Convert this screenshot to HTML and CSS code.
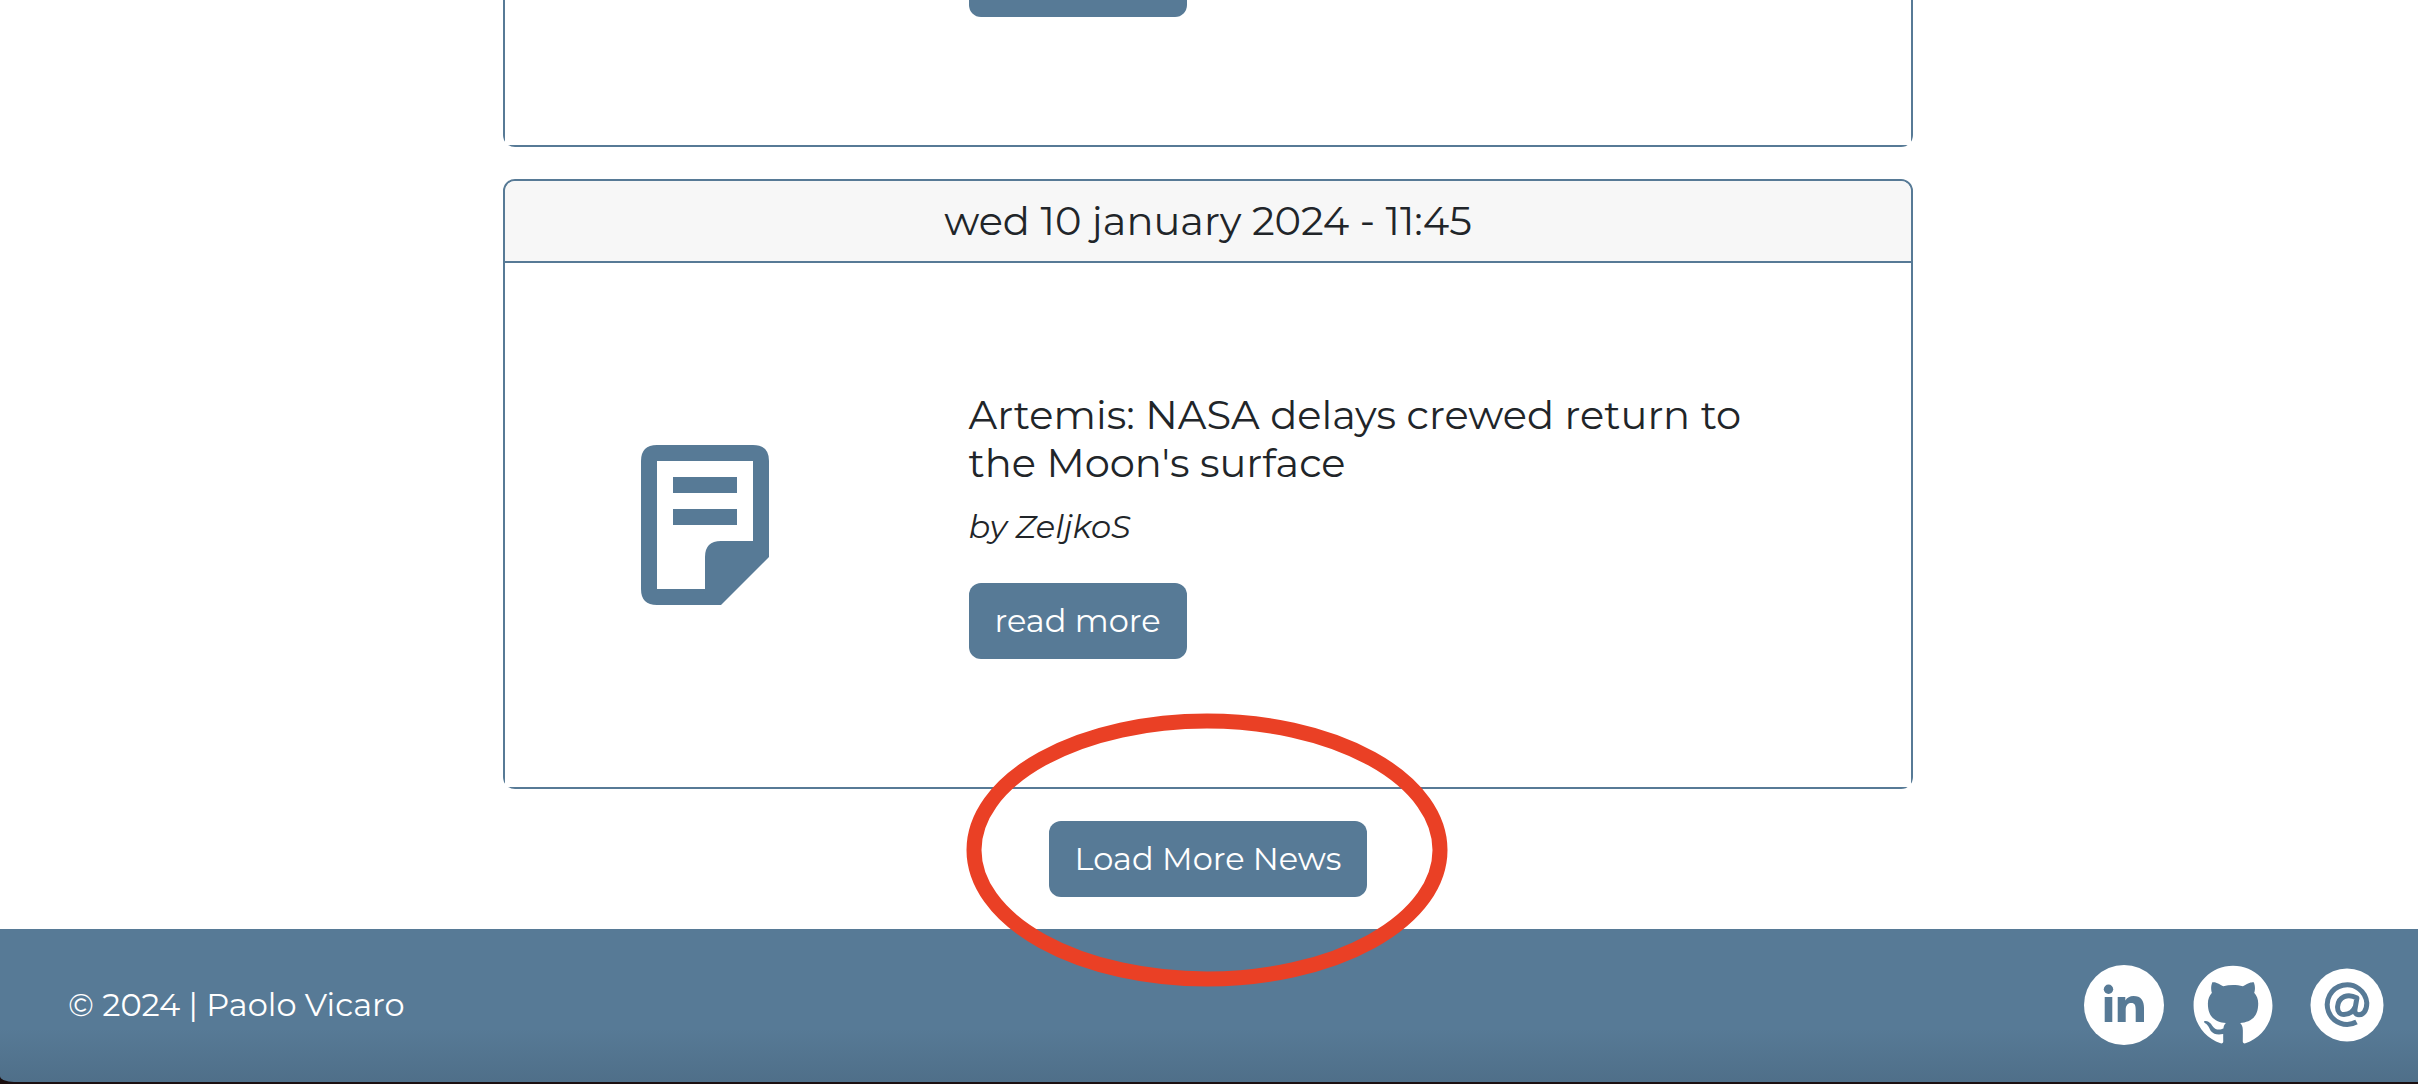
FILE: index.html
```html
<!DOCTYPE html>
<html lang="en">
<head>
<meta charset="utf-8">
<meta name="viewport" content="width=device-width, initial-scale=1">
<title>News</title>
<link rel="stylesheet" href="styles.css">
</head>
<body>
<main class="news">
  <article class="card">
    <div class="card-body">
      <div class="card-icon"></div>
      <div class="card-text">
        <button class="btn" type="button">read more</button>
      </div>
    </div>
  </article>

  <article class="card">
    <header class="card-header">wed 10 january 2024 - 11:45</header>
    <div class="card-body">
      <div class="card-icon">
        <svg class="note" viewBox="0 0 8 10" aria-hidden="true">
          <path fill-rule="evenodd" d="M1 0H7Q8 0 8 1V7L5 10H1Q0 10 0 9V1Q0 0 1 0ZM1 1V9H4V7Q4 6 5 6H7V1ZM2 2H6V3H2ZM2 4H6V5H2Z"/>
        </svg>
      </div>
      <div class="card-text">
        <h2 class="title">Artemis: NASA delays crewed return to the Moon's surface</h2>
        <p class="author">by ZeljkoS</p>
        <button class="btn" type="button">read more</button>
      </div>
    </div>
  </article>

  <div class="load-more">
    <button class="btn" type="button">Load More News</button>
    <svg class="highlight" viewBox="0 0 482 274" aria-hidden="true">
      <ellipse cx="241" cy="137" rx="233" ry="129"/>
    </svg>
  </div>
</main>

<footer class="footer">
  <p class="copyright">© 2024 | Paolo Vicaro</p>
  <nav class="social">
    <a href="#linkedin" aria-label="LinkedIn">
      <svg viewBox="0 0 80 80">
        <circle class="disc" cx="40" cy="40" r="40"/>
        <circle class="mark" cx="24.500" cy="24.300" r="4.700"/>
        <path class="mark" d="M20.700 32H28.300V57H20.700ZM33.700 32H41.300V35.400C43 32.600 46 31 49.500 31C57 31 60 35.500 60 43V57H51.700V45C51.700 40.500 50.800 38 47.300 38C43.500 38 41.700 40.700 41.700 45V57H33.700Z"/>
      </svg>
    </a>
    <a href="#github" aria-label="GitHub">
      <svg viewBox="3 -1 99 99">
        <path class="disc" fill-rule="evenodd" d="M48.854 0C21.839 0 0 22 0 49.217c0 21.756 13.993 40.172 33.405 46.690 2.427.490 3.316-1.059 3.316-2.362 0-1.141-.080-5.052-.080-9.127-13.590 2.934-16.420-5.867-16.420-5.867-2.184-5.704-5.420-7.170-5.420-7.170-4.448-3.015.324-3.015.324-3.015 4.934.326 7.523 5.052 7.523 5.052 4.367 7.496 11.404 5.378 14.235 4.074.404-3.178 1.699-5.378 3.074-6.600-10.839-1.141-22.243-5.378-22.243-24.283 0-5.378 1.940-9.778 5.014-13.200-.485-1.222-2.184-6.275.486-13.038 0 0 4.125-1.304 13.426 5.052a46.970 46.970 0 0 1 12.214-1.630c4.125 0 8.330.571 12.213 1.630 9.302-6.356 13.427-5.052 13.427-5.052 2.670 6.763.970 11.816.485 13.038 3.155 3.422 5.015 7.822 5.015 13.200 0 18.905-11.404 23.060-22.324 24.283 1.780 1.548 3.316 4.481 3.316 9.126 0 6.600-.080 11.897-.080 13.526 0 1.304.890 2.853 3.316 2.364 19.412-6.520 33.405-24.935 33.405-46.691C97.707 22 75.788 0 48.854 0z"/>
      </svg>
    </a>
    <a href="#email" aria-label="Email">
      <svg viewBox="-2 -3 80 80">
        <circle class="disc" cx="37" cy="37" r="36.500"/>
        <path class="line" d="M46.500 54A19.800 19.800 0 1 1 56.800 35C56.800 43.500 52.500 46.800 49 46.800C45.300 46.800 44.500 44 45 41L46.900 30C38 25 28.500 28.500 27.600 38.500C27.200 43.700 30 46.600 34 46.600C39.500 46.600 43.900 43 45 39"/>
      </svg>
    </a>
  </nav>
</footer>
</body>
</html>
```

FILE: styles.css
```css
:root {
  --blue: #577a96;
  --ink: #212529;
}

* {
  box-sizing: border-box;
}

html {
  height: 100%;
}

body {
  height: 100%;
  margin: 0;
  border-bottom: 2px solid #1b0f10;
  display: flex;
  flex-direction: column;
  overflow: hidden;
  background: linear-gradient(#ffffff 50%, #1b0f10 50%);
  color: var(--ink);
  font-family: Montserrat, Inter, sans-serif;
  font-size: 32px;
  line-height: 48px;
}

/* The list stays scrolled to its end, older cards run off the top. */
.news {
  flex: 1;
  min-height: 0;
  display: flex;
  flex-direction: column;
  justify-content: flex-end;
  align-items: center;
  gap: 32px;
  padding: 0 2px 32px 0;
  background: #ffffff;
}

.card {
  flex: none;
  width: 58.4%;
  border: 2px solid var(--blue);
  border-radius: 12px;
  background: #ffffff;
}

.card-header {
  padding: 16px 32px;
  border-bottom: 2px solid var(--blue);
  border-radius: 10px 10px 0 0;
  background: #f7f7f7;
  font-size: 40px;
  text-align: center;
}

.card-body {
  display: grid;
  grid-template-columns: 400px 1fr;
  gap: 64px;
  align-items: center;
  padding: 128px 128px 128px 0;
  background: #ffffff;
}

.card-icon {
  display: flex;
  justify-content: center;
}

.note {
  width: 128px;
  height: 160px;
  fill: var(--blue);
}

.title {
  margin: 0 0 16px;
  font-size: 40px;
  font-weight: 400;
}

.author {
  margin: 0 0 32px;
  font-style: italic;
}

.btn {
  display: block;
  padding: 14px 26px;
  border: 0;
  border-radius: 12px;
  background: var(--blue);
  color: #ffffff;
  font: inherit;
  cursor: pointer;
}

.load-more {
  position: relative;
  flex: none;
}

.highlight {
  position: absolute;
  z-index: 1;
  top: 50%;
  left: 50%;
  width: 482px;
  height: 274px;
  margin: -146px 0 0 -242px;
  fill: none;
  stroke: #ea4025;
  stroke-width: 15px;
  pointer-events: none;
}

.footer {
  flex: none;
  display: flex;
  align-items: center;
  justify-content: space-between;
  padding: 36px 30px 37px 68px;
  border-bottom-left-radius: 14px 6px;
  background: linear-gradient(var(--blue) 65%, #4f6f89);
  color: #ffffff;
}

.copyright {
  margin: 0;
}

.social {
  display: flex;
  gap: 32px;
}

.social a {
  width: 80px;
  height: 80px;
}

.social svg {
  display: block;
  width: 100%;
  height: 100%;
  overflow: visible;
}

.disc {
  fill: #ffffff;
}

.mark {
  fill: var(--blue);
}

.line {
  fill: none;
  stroke: var(--blue);
  stroke-width: 5px;
  stroke-linejoin: round;
}
```
